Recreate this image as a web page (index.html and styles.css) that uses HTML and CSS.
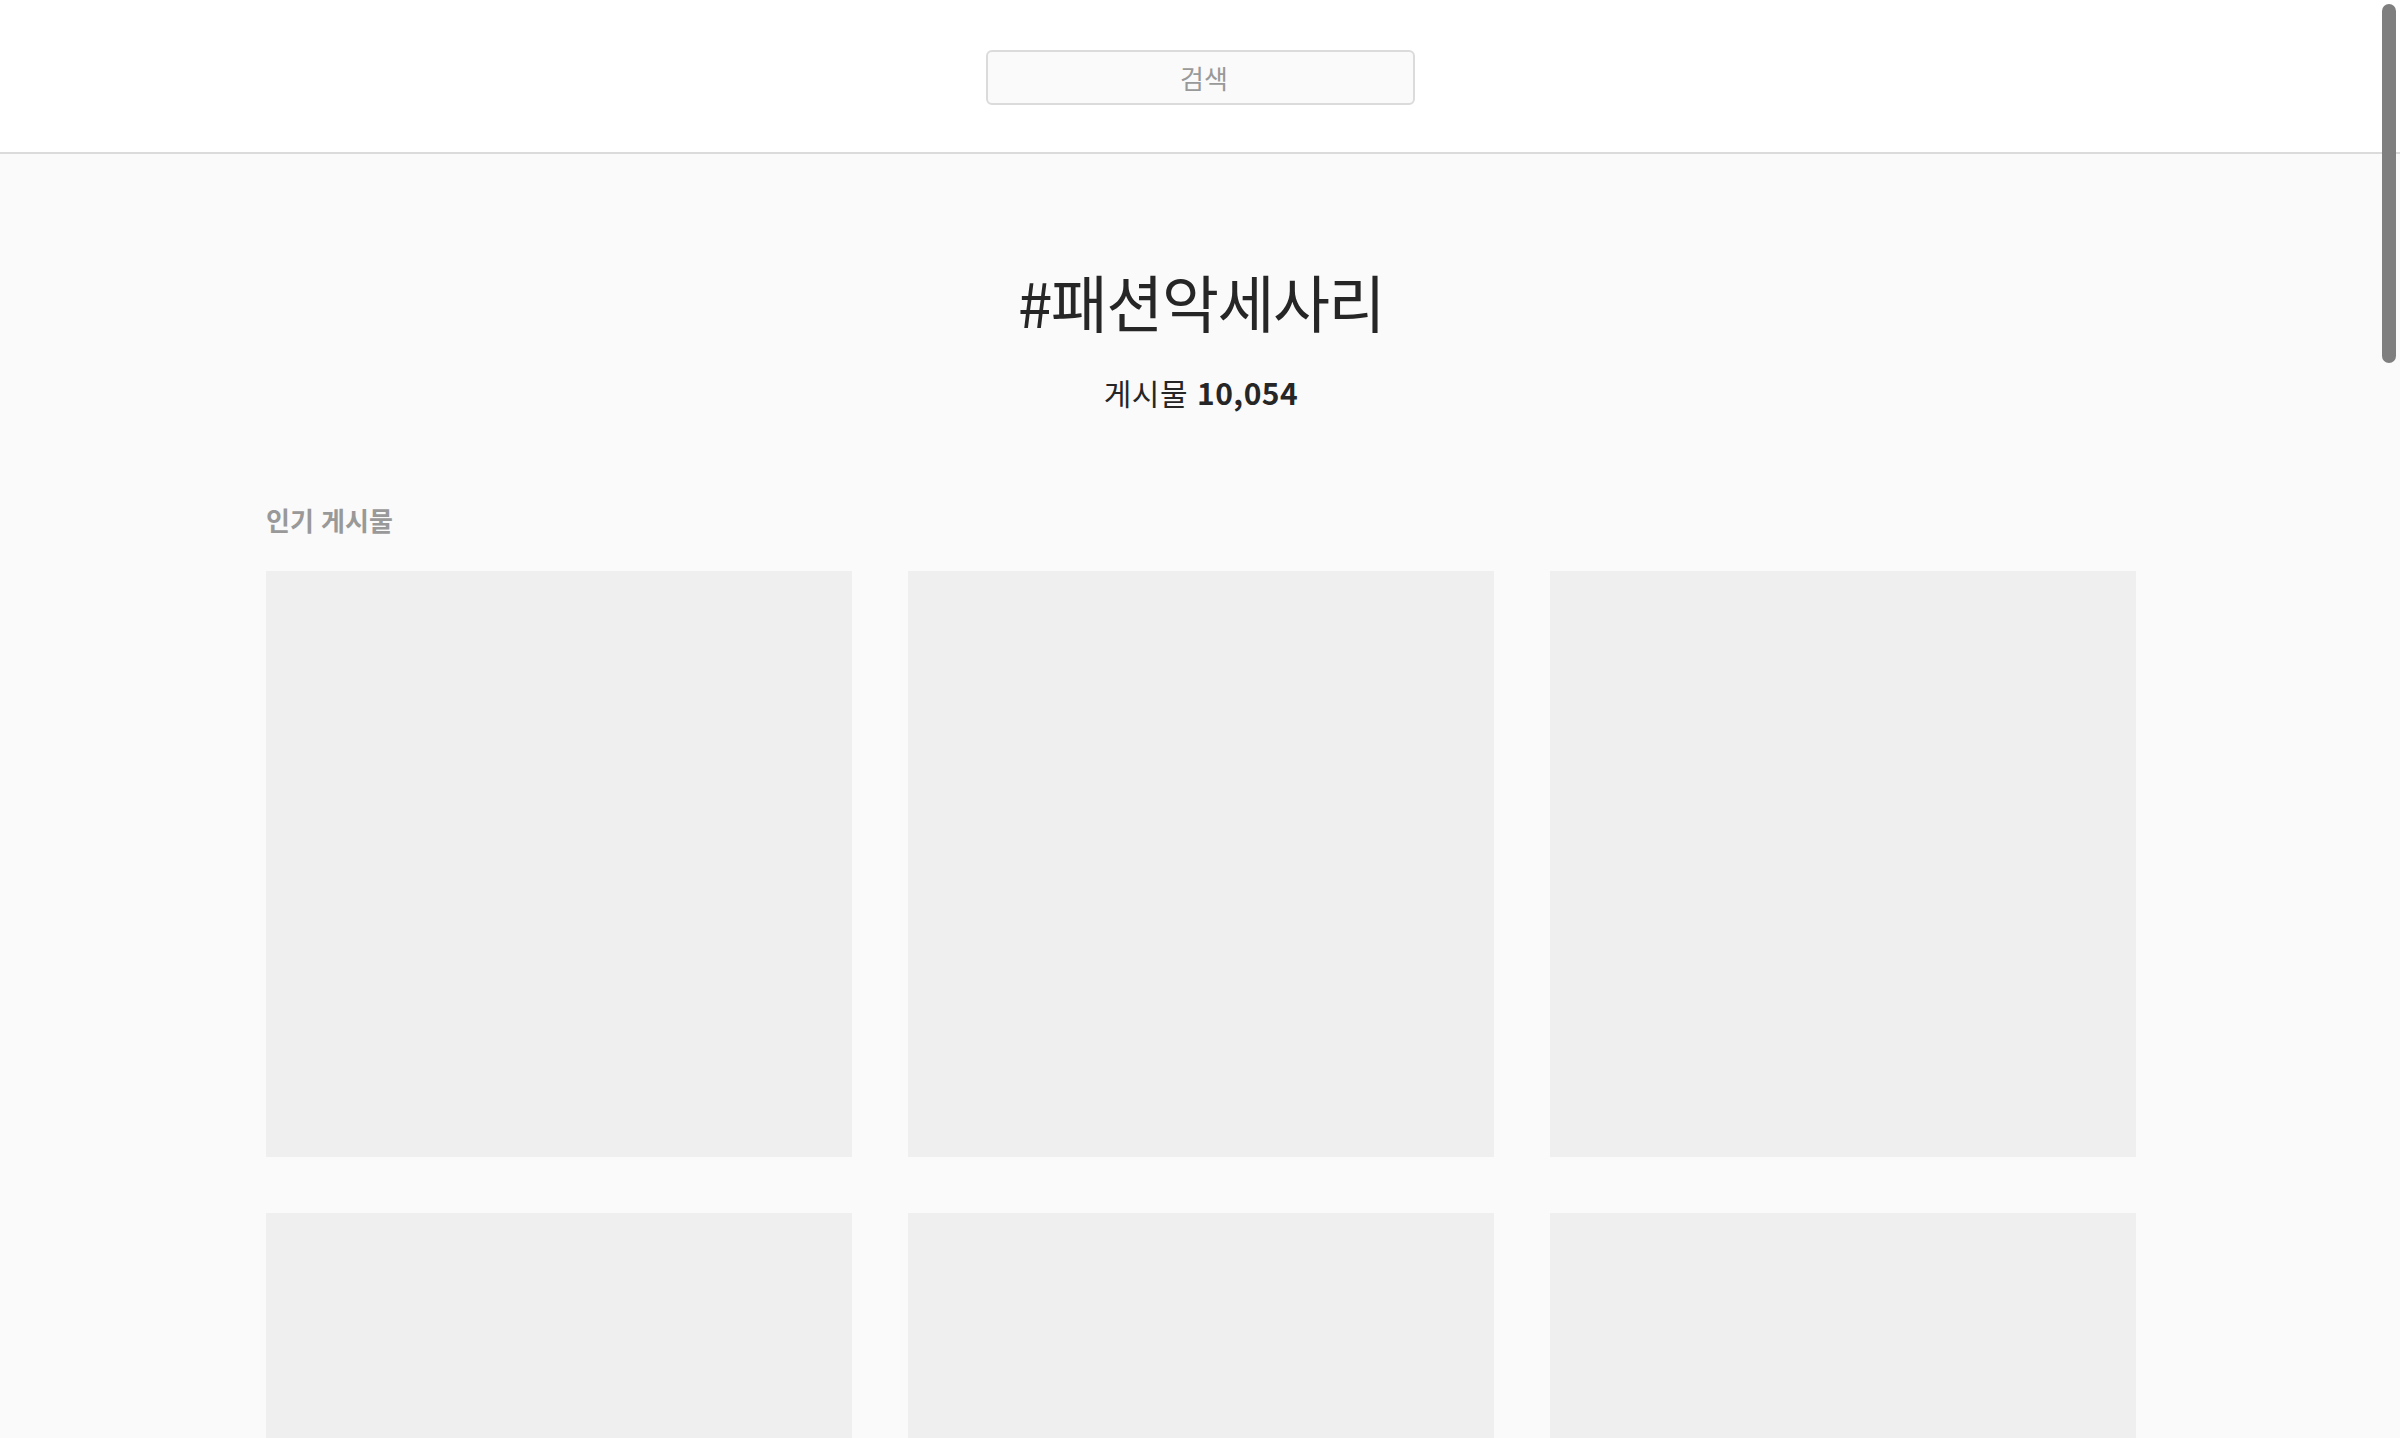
FILE: index.html
```html
<!DOCTYPE html>
<html lang="ko">
<head>
<meta charset="utf-8">
<title>#패션악세사리</title>
<link rel="stylesheet" href="styles.css">
</head>
<body>
<header class="topbar">
  <div class="search">검색</div>
</header>
<main class="page">
  <section class="tag-head">
    <h1 class="tag-title">#패션악세사리</h1>
    <p class="tag-count">게시물 <strong>10,054</strong></p>
  </section>
  <section class="posts">
    <h2 class="posts-label">인기 게시물</h2>
    <div class="grid">
      <div class="tile"></div>
      <div class="tile"></div>
      <div class="tile"></div>
      <div class="tile"></div>
      <div class="tile"></div>
      <div class="tile"></div>
      <div class="tile"></div>
      <div class="tile"></div>
      <div class="tile"></div>
    </div>
  </section>
</main>
<div class="scroll-thumb"></div>
</body>
</html>
```

FILE: styles.css
```css
html {
  scrollbar-width: none;
}
html::-webkit-scrollbar,
body::-webkit-scrollbar {
  display: none;
  width: 0;
}
body {
  margin: 0;
  background: #fafafa;
  font-family: "Noto Sans CJK KR", "Noto Sans", sans-serif;
  color: #262626;
}
.topbar {
  height: 152px;
  background: #fff;
  border-bottom: 2px solid #dbdbdb;
  display: flex;
  align-items: center;
  justify-content: center;
}
.search {
  box-sizing: border-box;
  width: 429px;
  height: 55px;
  margin-top: 3px;
  padding-left: 8px;
  border: 2px solid #dbdbdb;
  border-radius: 6px;
  background: #fafafa;
  color: #999;
  font-size: 26px;
  display: flex;
  align-items: center;
  justify-content: center;
}
.page {
  width: 1870px;
  margin: 0 auto;
  padding-left: 2px;
}
.tag-head {
  text-align: center;
  padding-top: 107px;
}
.tag-title {
  margin: 0;
  font-size: 62px;
  line-height: 80px;
  font-weight: 400;
  letter-spacing: -1.5px;
}
.tag-count {
  margin: 31px 0 0;
  font-size: 30px;
  line-height: 40px;
  letter-spacing: 0.5px;
}
.tag-count strong {
  font-weight: 700;
}
.posts {
  margin-top: 90px;
}
.posts-label {
  margin: 0 0 33px;
  font-size: 26px;
  line-height: 36px;
  font-weight: 700;
  color: #999;
}
.grid {
  display: grid;
  grid-template-columns: repeat(3, 1fr);
  gap: 56px;
  padding-bottom: 120px;
}
.tile {
  aspect-ratio: 1 / 1;
  background: #efefef;
}
.scroll-thumb {
  position: fixed;
  top: 4px;
  right: 4px;
  width: 14px;
  height: 359px;
  border-radius: 7px;
  background: #7f7f7f;
}
```
